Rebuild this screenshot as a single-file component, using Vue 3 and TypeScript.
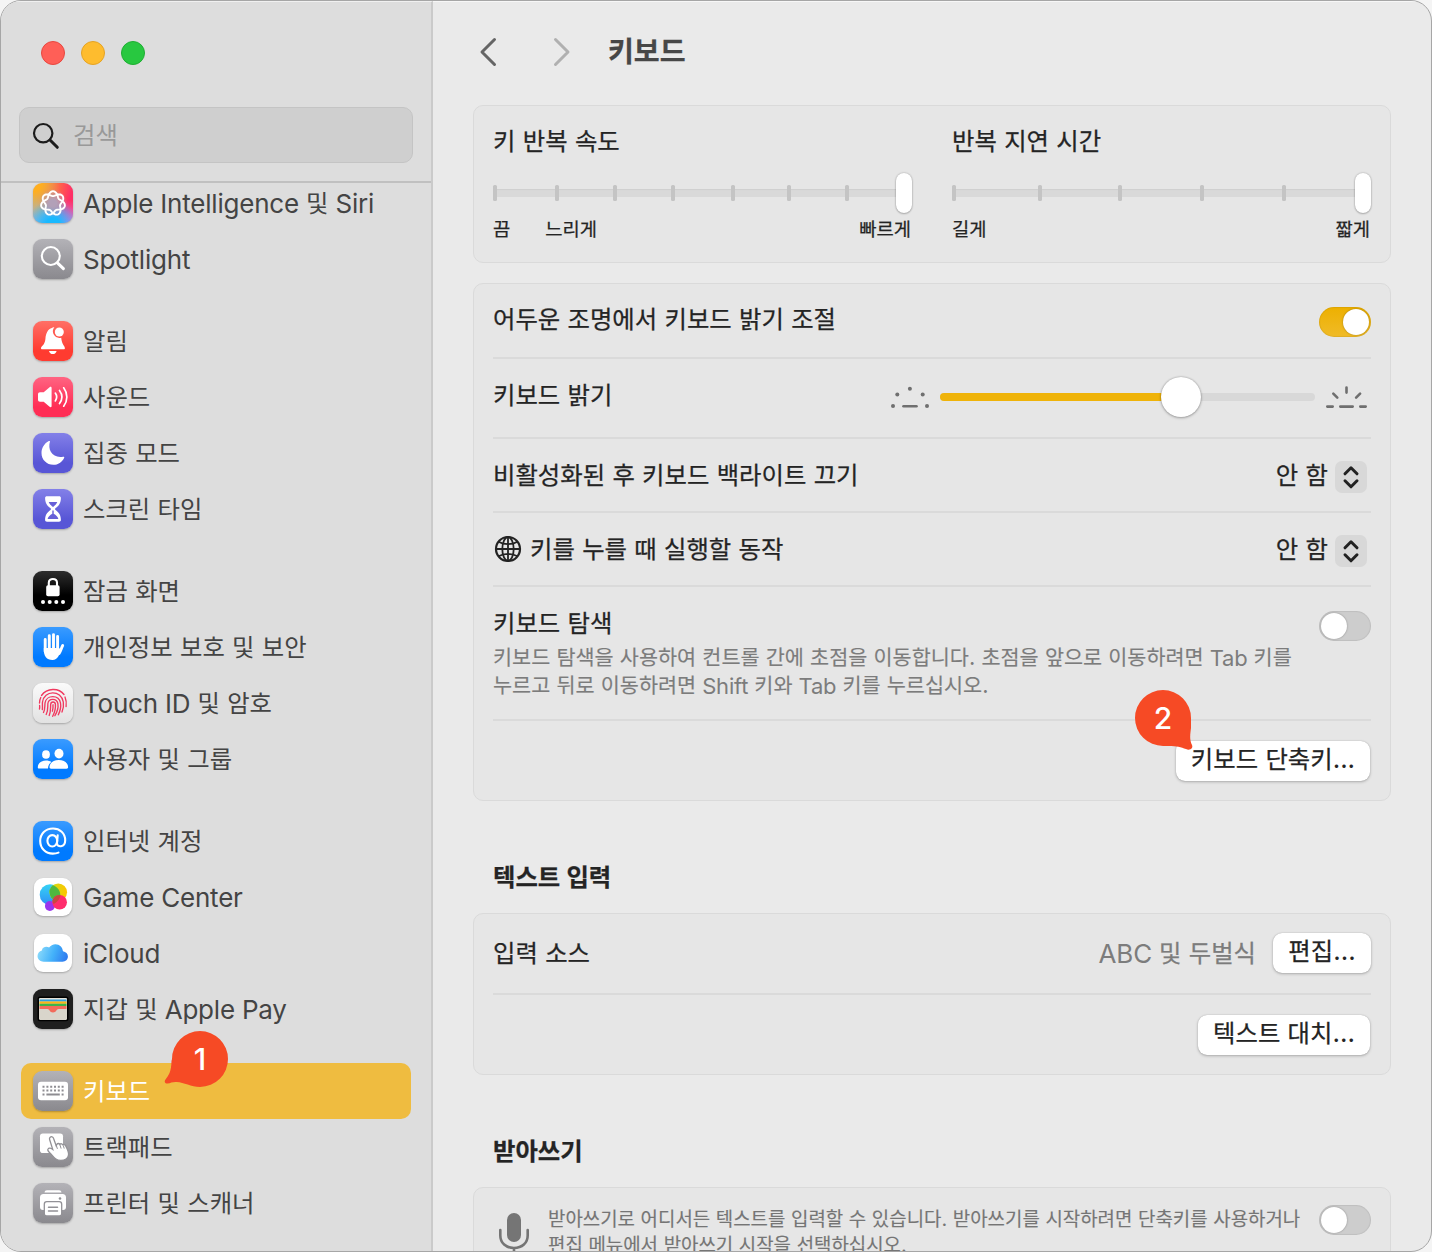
<script setup lang="ts">
import { h } from 'vue'

interface Item { label: string; icon: string; bg: string; selected?: boolean }

// Renders a label, wrapping Hangul runs so they can be sized separately from Latin text.
const Txt = (props: { t: string }) =>
  h('span', { class: 'txt' }, props.t.split(/([\uAC00-\uD7A3]+)/).filter(Boolean).map((run) =>
    /[\uAC00-\uD7A3]/.test(run) ? h('span', { class: 'ko' }, run) : h('span', { class: /[A-Za-z]/.test(run) ? 'la word' : 'la' }, run)))
Txt.props = ['t']

const rosette = (() => {
  const pts: string[] = []
  for (let i = 0; i < 168; i++) {
    const a = (i / 168) * Math.PI * 4
    const r = 9.7 + 2.4 * Math.cos(3.5 * a)
    pts.push(`${(20 + r * Math.sin(a)).toFixed(2)},${(20.4 - r * Math.cos(a)).toFixed(2)}`)
  }
  return pts.join(' ')
})()

const icons: Record<string, string> = {
  ai: `<polygon points="${rosette}" fill="none" stroke="#fff" stroke-width="1.9" stroke-linejoin="round"/>`,
  spotlight: '<circle cx="17.8" cy="17" r="9" fill="none" stroke="#fff" stroke-width="2.100"/><path d="M24.4 23.8l6 5.8" stroke="#fff" stroke-width="3" stroke-linecap="round"/>',
  bell: '<path d="M8 27.2c0-2.2 3.8-2.8 4.4-9.2.4-6 2.6-10 6.5-11 .7-.8 1.6-1 2.5-.8a6.6 6.6 0 0 0 6.8 10.5c.6 7 3.7 8.2 3.7 10.5 0 .7-.5 1-1.200 1H9.200c-.7 0-1.200-.3-1.200-1z" fill="#fff"/><circle cx="26.300" cy="11" r="4.500" fill="#fff"/><path d="M16 30h7.600c-.4 2-1.900 3.100-3.800 3.100S16.400 32 16 30z" fill="#fff"/>',
  sound: '<path d="M5 17.200c0-1.300.8-2 2-2h3.700l5.900-5c1-.8 2-.4 2 .8v18c0 1.200-1 1.600-2 .8l-5.900-5H7c-1.200 0-2-.7-2-2z" fill="#fff"/><g fill="none" stroke="#fff" stroke-width="1.700" stroke-linecap="round"><path d="M22.300 16.100c1.700 2.400 1.700 5.400 0 7.800M26.500 13.500c3 4 3 9 0 13M30.700 10.800c4.200 5.600 4.200 12.800 0 18.400"/></g>',
  moon: '<path d="M17 8.500c-2.700 8.200 2.600 17.200 13.200 15.200.8-.2 1.300.3 1 1C29 29.300 25 31.800 20.400 31.800 13.600 31.800 8.500 26.600 8.500 20c0-5 3-9.700 7.300-11.900.8-.4 1.400-.2 1.200.4z" fill="#fff"/>',
  hourglass: '<path d="M14 7.200h12c1.200 0 1.900.6 1.900 1.700 0 5-2 7.700-5.300 10.200-.7.600-.7 1.500 0 2 3.300 2.500 5.300 5 5.300 10 0 1.100-.7 1.700-1.900 1.700H14c-1.200 0-1.900-.6-1.900-1.700 0-5 2-7.500 5.300-10 .7-.5.7-1.400 0-2-3.300-2.500-5.300-5.200-5.300-10.200 0-1.100.7-1.700 1.900-1.700z" fill="#fff"/><path d="M15.700 13h8.600c-.8 1.900-2 3.100-3.300 4.200-.7.700-1.300.7-2 0-1.300-1.100-2.500-2.300-3.300-4.200zM19.300 21.500h1.400v3.300c2.300 1.200 4 2.800 4.700 5.200H14.600c.7-2.400 2.400-4 4.700-5.200z" fill="#6760d8"/>',
  lock: '<rect x="13.200" y="14.300" width="13.400" height="11" rx="1.800" fill="#fff"/><path d="M15.800 15v-3.300c0-5 8.200-5 8.200 0V15" fill="none" stroke="#fff" stroke-width="2.100"/><g fill="#fff"><circle cx="10" cy="31" r="2"/><circle cx="16.700" cy="31" r="2"/><circle cx="23.300" cy="31" r="2"/><circle cx="30" cy="31" r="2"/></g>',
  hand: '<g fill="none" stroke="#fff" stroke-width="2.900" stroke-linecap="round"><path d="M12.200 12.500v12M16.300 8.800v14M20.500 7.600v15M24.600 9.500v15"/><path d="M29.700 18.500c-1.200 2-2 5.500-3.600 8"/></g><path d="M10.800 21h15.200l1.700 1.500c-1.200 5.500-3 10.400-8.200 10.400-6 0-8.700-4-8.700-10z" fill="#fff"/>',
  touch: '<g fill="none" stroke="#f0395f" stroke-width="1.350" stroke-linecap="round"><path d="M8.500 12.500C14 4.500 26 4.800 31 11.500M32 14c1.200 2.800 1.600 6 1.100 9.500M6.500 20c0-2 .4-3.800 1.300-5.500M6.600 22.500c.2 1.300.1 2.300-.1 3.500"/><path d="M9.300 26.500c.5-2.200-.2-4.500.2-7.500C11 7 28.200 6.500 30.300 19c.6 3.500-.2 7.300-1.300 10"/><path d="M10.500 29.500c1.900-3.500 1-6.500 1.600-9.800 1.400-8 13.800-8.200 15.400.3.800 4.200-.6 8.500-2.200 11.800"/><path d="M13.200 31.500c2.200-4 1.300-7.500 1.700-11 .6-5.500 9-5.700 10 .2.600 4-1 8.800-3 12"/><path d="M16.200 32.500c1.800-4 1.200-8 1.500-11.300.3-2.800 4.300-3 4.700 0 .4 3.800-.8 8.300-2.700 12.100"/><path d="M20 21.800c.2 2.200-.1 4.300-.6 6.400"/></g>',
  users: '<g fill="#fff"><ellipse cx="13" cy="15.500" rx="3.900" ry="4.300"/><path d="M4.800 28.500c0-4.500 3.700-7 8.200-7 2.200 0 4 .5 5.300 1.500-2 1.500-3.200 3.500-3.300 6.500H6c-.8 0-1.200-.3-1.200-1z"/><ellipse cx="26" cy="14.600" rx="4.500" ry="4.900"/><path d="M16.500 28.300c0-4.300 4-7.300 9.300-7.300s9.300 3 9.300 7.300c0 .9-.5 1.400-1.600 1.400H18.100c-1.100 0-1.600-.5-1.600-1.400z"/></g>',
  at: '<g fill="none" stroke="#fff" stroke-width="2.100" stroke-linecap="round"><ellipse cx="19.300" cy="19.800" rx="4.900" ry="5.700"/><path d="M24.700 14.200l-.7 8c-.3 4.600 8.200 4.500 8.200-3C32.200 12 26.800 7.500 20 7.500 12.500 7.500 7.200 12.700 7.200 20S12.500 32.600 19.800 32.600c2.200 0 4-.3 5.700-1"/></g>',
  game: '<defs><linearGradient id="gb" x1="0" y1="0" x2="0" y2="1"><stop offset="0" stop-color="#36d3f5"/><stop offset="1" stop-color="#2f8ff5"/></linearGradient><linearGradient id="gy" x1="0" y1="0" x2="1" y2="0"><stop offset="0" stop-color="#c8e01a"/><stop offset="1" stop-color="#ffc400"/></linearGradient></defs><circle cx="17" cy="17.500" r="11" fill="url(#gb)"/><circle cx="16.700" cy="29.500" r="5.200" fill="#9a35ee"/><circle cx="25.500" cy="15" r="9.300" fill="url(#gy)"/><path d="M19.900 7.600a11 11 0 0 1 6 16.600 9.300 9.300 0 0 1-6-16.600z" fill="#4fb83f"/><circle cx="27" cy="25.500" r="7.700" fill="#ff2d6c"/><path d="M19.500 23.500a7.700 7.700 0 0 1 8.300-5.600c0 3.500-2.500 7-7 9.500-.9-.9-1.400-2.300-1.300-3.900z" fill="#c9473f"/>',
  cloud: '<defs><linearGradient id="gc" x1="0" y1=".3" x2="1" y2=".5"><stop offset="0" stop-color="#8edcfb"/><stop offset=".55" stop-color="#43b1fa"/><stop offset="1" stop-color="#2f7df0"/></linearGradient></defs><path d="M10.500 29.500C6.800 29.500 4 27 4 23.600c0-2.900 1.900-5.200 4.600-5.900.3-3.300 4.500-4.900 7.600-3 1.500-2.200 4-3.600 6.700-3.600 4.300 0 7.500 3.200 7.900 7.500 3 .5 5.200 2.700 5.200 5.500 0 3.100-2.500 5.400-5.700 5.400z" transform="translate(-.3 -.4)" fill="url(#gc)"/>',
  wallet: '<rect x="4.500" y="7.500" width="31" height="24.800" rx="2.500" fill="#000"/><rect x="6" y="9" width="28" height="22" rx="1.500" fill="#d9d5cb"/><path d="M6 12V10.500C6 9.600 6.600 9 7.500 9h25c.9 0 1.500.6 1.500 1.500V12z" fill="#e6e2d8"/><path d="M6.500 10.500h27v2h-27z" fill="#2e9fe0"/><path d="M6.500 12.500h27v2.200h-27z" fill="#fdb515"/><path d="M6.500 14.700h27v2.300h-27z" fill="#3cb54a"/><path d="M6.500 17h27v3h-8c-2 0-2.200 3.500-5.500 3.500s-3.500-3.500-5.500-3.500h-8z" fill="#f26b5b"/>',
  keyboard: '<rect x="5" y="10.700" width="30" height="18.500" rx="3" fill="#fff"/><g fill="#8e8d92"><path d="M9.500 14.700h2v2h-2zM13.400 14.700h2v2h-2zM17.200 14.700h2v2h-2zM21 14.700h2v2h-2zM24.800 14.700h2v2h-2zM28.600 14.700h2v2h-2zM9.500 18.600h2v2h-2zM13.400 18.600h2v2h-2zM17.200 18.600h2v2h-2zM21 18.600h2v2h-2zM24.800 18.600h2v2h-2zM28.600 18.600h2v2h-2zM9.500 22.500h2v2h-2zM13.400 22.500h13.400v2H13.400zM28.600 22.500h2v2h-2z"/></g>',
  trackpad: '<rect x="7" y="6.500" width="23" height="19.500" rx="2.800" fill="#fff"/><path d="M17.200 10.200c1.100-.9 2.800-.5 3.300 1l2.700 7.500.6-1.300c.8-1.200 2.300-1.200 3 0 1-1 2.500-.8 3.200.5 1.200-.6 2.500 0 2.800 1.200 1.200 2.500 3.200 6 2.700 9-.5 3.300-4 5.300-7.700 5.300-4.800 0-6.800-2.800-10.200-6.800-2.200-2-3.600-3.100-2.600-4.600.9-1.500 3-.8 4.700.4L16.600 12.500c-.3-.9-.1-1.700.6-2.300z" fill="#fff" stroke="#929196" stroke-width="1.300"/><path d="M23.300 18.500l1 3M27 18l1 3.200M30.400 18.800l.7 2.400" stroke="#929196" stroke-width="1" stroke-linecap="round"/>',
  printer: '<path d="M11.500 9.500c.3-1.500 1-2.200 2.500-2.200h12c1.500 0 2.200.7 2.500 2.200z" fill="#fff"/><path d="M7 14.500c0-2.300 1.200-3.500 3.500-3.500h19c2.300 0 3.500 1.200 3.500 3.500V24c0 2-1 3-3 3H10c-2 0-3-1-3-3z" fill="#fff"/><rect x="11.300" y="18.700" width="17.400" height="14.300" rx="2.500" fill="#fff" stroke="#929196" stroke-width="1.300"/><path d="M15.500 24.300h9M15.500 28h9" stroke="#929196" stroke-width="1.500" stroke-linecap="round"/><circle cx="27" cy="15.500" r="1.300" fill="#929196"/>',
}

const groups: Item[][] = [
  [
    { label: 'Apple Intelligence 및 Siri', icon: 'ai', bg: 'rainbow' },
    { label: 'Spotlight', icon: 'spotlight', bg: 'gray' },
  ],
  [
    { label: '알림', icon: 'bell', bg: 'red' },
    { label: '사운드', icon: 'sound', bg: 'pink' },
    { label: '집중 모드', icon: 'moon', bg: 'indigo' },
    { label: '스크린 타임', icon: 'hourglass', bg: 'indigo' },
  ],
  [
    { label: '잠금 화면', icon: 'lock', bg: 'black' },
    { label: '개인정보 보호 및 보안', icon: 'hand', bg: 'blue' },
    { label: 'Touch ID 및 암호', icon: 'touch', bg: 'light' },
    { label: '사용자 및 그룹', icon: 'users', bg: 'blue' },
  ],
  [
    { label: '인터넷 계정', icon: 'at', bg: 'blue' },
    { label: 'Game Center', icon: 'game', bg: 'white' },
    { label: 'iCloud', icon: 'cloud', bg: 'white' },
    { label: '지갑 및 Apple Pay', icon: 'wallet', bg: 'dark' },
  ],
  [
    { label: '키보드', icon: 'keyboard', bg: 'gray', selected: true },
    { label: '트랙패드', icon: 'trackpad', bg: 'gray' },
    { label: '프린터 및 스캐너', icon: 'printer', bg: 'gray' },
  ],
]

const sliders = [
  { title: '키 반복 속도', ticks: [0, 62, 120, 178, 238, 294, 352], labels: ['끔', '느리게', '빠르게'] },
  { title: '반복 지연 시간', ticks: [0, 86, 166, 248, 330], labels: ['길게', '짧게'] },
]
</script>

<template>
  <div class="window">
    <aside class="sidebar">
      <div class="lights"><i class="l-red" /><i class="l-yellow" /><i class="l-green" /></div>
      <div class="search">
        <svg width="28" height="28" viewBox="0 0 28 28"><circle cx="11.200" cy="11.200" r="9.200" fill="none" stroke="#1c1c1c" stroke-width="2.200" /><path d="M18 18l7.300 7.300" stroke="#1c1c1c" stroke-width="3" stroke-linecap="round" /></svg>
        <Txt t="검색" />
      </div>
      <nav class="list">
        <div v-for="(g, gi) in groups" :key="gi" class="group">
          <div v-for="it in g" :key="it.label" class="item" :class="{ selected: it.selected }">
            <svg class="icon" :class="it.bg" viewBox="0 0 40 40" v-html="icons[it.icon]" />
            <Txt :t="it.label" />
          </div>
        </div>
      </nav>
    </aside>

    <main class="main">
      <header class="toolbar">
        <svg class="nav" width="20" height="32" viewBox="0 0 20 32"><path d="M15.500 3.500L3 16l12.500 12.500" stroke="#656565" /></svg>
        <svg class="nav next" width="20" height="32" viewBox="0 0 20 32"><path d="M4.500 3.500L17 16 4.500 28.500" stroke="#b0b0b0" /></svg>
        <h1><Txt t="키보드" /></h1>
      </header>

      <section class="card repeat">
        <div v-for="s in sliders" :key="s.title" class="rate">
          <div class="rate-title"><Txt :t="s.title" /></div>
          <div class="track">
            <i v-for="t in s.ticks" :key="t" class="tick" :style="{ left: t + 'px' }" />
            <i class="thumb" />
          </div>
          <div class="rate-labels"><Txt v-for="l in s.labels" :key="l" :t="l" /></div>
        </div>
      </section>

      <section class="card options">
        <div class="row r1"><Txt t="어두운 조명에서 키보드 밝기 조절" /><div class="toggle on"><i /></div></div>
        <div class="row r2">
          <Txt t="키보드 밝기" />
          <div class="bright">
            <svg width="40" height="26" viewBox="0 0 40 26" fill="#6f6f6f"><circle cx="3" cy="22" r="2" /><circle cx="7.300" cy="10.400" r="2" /><circle cx="19.900" cy="4.700" r="2" /><circle cx="32.700" cy="10.400" r="2" /><circle cx="37" cy="22" r="2" /><rect x="12.200" y="21" width="15.600" height="2.600" rx="1.300" /></svg>
            <div class="range"><i class="fill" /><i class="knob" /></div>
            <svg width="42" height="26" viewBox="0 0 42 26" stroke="#6f6f6f" stroke-width="2.600" stroke-linecap="round"><path d="M21.500 3.600v5M8.300 9.600l4 4M35.100 9.600l-4 4M2.300 22.600h5.400M15.300 22.600h12.400M35.300 22.600h5.400" /></svg>
          </div>
        </div>
        <div class="row r3">
          <Txt t="비활성화된 후 키보드 백라이트 끄기" />
          <div class="popup"><Txt t="안 함" /><svg width="32" height="32" viewBox="0 0 32 32"><path d="M10 12.800l6-6 6 6M10 19.800l6 6 6-6" /></svg></div>
        </div>
        <div class="row r3">
          <div class="globe-label">
            <svg width="28" height="28" viewBox="0 0 28 28" fill="none" stroke="#222" stroke-width="1.800"><circle cx="14" cy="14" r="12" stroke-width="2.200" /><ellipse cx="14" cy="14" rx="5.700" ry="12" /><path d="M14 2v24M2 14h24M4.600 6.700c5.300 3.300 13.500 3.300 18.800 0M4.600 21.300c5.300-3.300 13.500-3.300 18.800 0" /></svg>
            <Txt t="키를 누를 때 실행할 동작" />
          </div>
          <div class="popup"><Txt t="안 함" /><svg width="32" height="32" viewBox="0 0 32 32"><path d="M10 12.800l6-6 6 6M10 19.800l6 6 6-6" /></svg></div>
        </div>
        <div class="row r5">
          <div class="nav-text">
            <Txt t="키보드 탐색" />
            <p><Txt t="키보드 탐색을 사용하여 컨트롤 간에 초점을 이동합니다. 초점을 앞으로 이동하려면 Tab 키를" /><br><Txt t="누르고 뒤로 이동하려면 Shift 키와 Tab 키를 누르십시오." /></p>
          </div>
          <div class="toggle"><i /></div>
        </div>
        <div class="row r6"><button class="b-short"><Txt t="키보드 단축키..." /></button></div>
      </section>

      <h2 class="h-text"><Txt t="텍스트 입력" /></h2>
      <section class="card input-card">
        <div class="row r7">
          <Txt t="입력 소스" />
          <div class="source"><Txt t="ABC 및 두벌식" /><button class="b-edit"><Txt t="편집..." /></button></div>
        </div>
        <div class="row r6"><button class="b-replace"><Txt t="텍스트 대치..." /></button></div>
      </section>

      <h2 class="h-dict"><Txt t="받아쓰기" /></h2>
      <section class="card dictation">
        <svg width="32" height="46" viewBox="0 0 32 46"><rect x="9" y="1" width="14" height="29" rx="7" fill="#757575" /><path d="M2.300 18v5.500c0 7.500 5.700 12.500 13.700 12.500s13.700-5 13.700-12.500V18M16 36v8" fill="none" stroke="#757575" stroke-width="2.600" stroke-linecap="round" /></svg>
        <p><Txt t="받아쓰기로 어디서든 텍스트를 입력할 수 있습니다. 받아쓰기를 시작하려면 단축키를 사용하거나" /><br><Txt t="편집 메뉴에서 받아쓰기 시작을 선택하십시오." /></p>
        <div class="toggle"><i /></div>
      </section>
    </main>

    <div class="pin pin1">
      <svg width="72" height="62" viewBox="0 0 72 62"><path d="M12 31A28 28 0 1 1 40 59C31 59 24 54.300 16.700 54 12 53.800 11 55 7.500 55.600 5 55.800 3.900 53.600 5.500 51.500 8.500 47.500 11.300 44 11.500 33z" /></svg>
      <span>1</span>
    </div>
    <div class="pin pin2">
      <svg width="72" height="66" viewBox="0 0 72 66"><path d="M59 30A28 28 0 1 0 31 58C43 57.500 48 58.500 54 61 57.500 63 61.500 60.500 60 57 57.300 51.500 58.300 46 59 40z" /></svg>
      <span>2</span>
    </div>
  </div>
</template>

<style>
body { margin: 0; background: #f4f4f4; }
.txt { white-space: nowrap; }
.txt .la { white-space: pre; }
.txt .word { position: relative; top: 1px; letter-spacing: -0.008em; }
.txt .ko { font-family: "Noto Sans CJK KR", sans-serif; font-size: 0.937em; line-height: 1px; }
.main .ko { -webkit-text-stroke: 0.25px currentColor; }
.main p .ko { font-size: 0.943em; -webkit-text-stroke-width: 0.15px; }
.main .dictation p .ko { font-size: 0.946em; }
</style>

<style scoped>
* { box-sizing: border-box; }
.window {
  position: relative; width: 1432px; height: 1252px; display: flex; overflow: hidden;
  border: 1px solid #a6a6a6; border-radius: 21px; background: #eaeaea;
  font: 26px/32px Inter, "Noto Sans CJK KR", sans-serif; color: #242424;
}
.sidebar { flex: none; width: 432px; display: flex; flex-direction: column; background: #ddd; border-right: 2px solid #cacaca; border-top: 1px solid #f0f0f0; color: #444; }
.lights { display: flex; gap: 16px; padding: 39px 0 0 40px; }
.lights i { width: 24px; height: 24px; border-radius: 50%; }
.l-red { background: #ff5f57; border: 1px solid #e8473f; }
.l-yellow { background: #febc2e; border: 1px solid #e5a324; }
.l-green { background: #28c840; border: 1px solid #1fae33; }
.search { margin: 42px 0 0 18px; width: 394px; height: 56px; flex: none; display: flex; align-items: center; gap: 13px; padding-left: 12px; border: 1px solid #c4c4c4; border-radius: 10px; background: #cfcfcf; color: #999; }
.search svg { margin-top: 1px; }
.list { margin-top: 18px; border-top: 2px solid #c0c0c0; flex: 1; overflow: hidden; }
.group { margin: 0 0 26px 20px; width: 390px; }
.group:first-child { margin-top: -8px; }
.item { height: 56px; display: flex; align-items: center; padding-left: 12px; gap: 10px; border-radius: 10px; }
.item.selected { background: #efbc40; color: #fff; }
.icon { width: 40px; height: 40px; flex: none; border-radius: 9px; box-shadow: 0 1px 2px rgba(0, 0, 0, .25); }
.gray { background: linear-gradient(#b3b2b7, #8a898e); }
.red { background: linear-gradient(#ff7066, #ff3b30 75%); }
.pink { background: linear-gradient(#ff6482, #ff2d55 75%); }
.indigo { background: linear-gradient(#8380e8, #5856d6 75%); }
.black { background: linear-gradient(#2e2e2e, #000 60%); }
.blue { background: linear-gradient(#3a9bff, #007aff 75%); }
.light { background: linear-gradient(#fafafa, #e2e2e2); }
.white { background: #fff; width: 38px; height: 38px; margin: 0 1px; }
.dark { background: #1f1f1f; }
.rainbow { background: radial-gradient(circle at 50% 50%, #b2a0b8 0 12%, transparent 50%), radial-gradient(circle at 50% 105%, #19b9ff 0 15%, transparent 55%), radial-gradient(circle at 0 0, #ffae1f 0 15%, transparent 70%), radial-gradient(circle at 100% 10%, #ff2f66 0 25%, transparent 75%), radial-gradient(circle at 100% 90%, #d58cff 0 20%, transparent 60%), #8db4e8; }

.main { flex: 1; border-top: 1px solid #f7f7f7; padding: 0 40px 0 40px; overflow: hidden; }
.toolbar { height: 103px; display: flex; align-items: flex-start; padding-top: 34px; }
.nav { margin-left: 6px; margin-top: 0; fill: none; stroke-width: 3; stroke-linecap: round; stroke-linejoin: round; }
.nav.next { margin-left: 52px; }
h1 { margin: -1px 0 0 37px; font-size: 30px; line-height: 32px; font-weight: 700; color: #474747; }
.card { width: 918px; background: #e6e6e6; border: 1px solid #dadada; border-radius: 10px; padding: 0 19px; }
.repeat { height: 158px; display: flex; justify-content: space-between; padding-top: 19px; }
.rate { width: 419px; }
.rate-title { height: 32px; }
.track { position: relative; height: 8px; margin-top: 32px; background: #d9d9d9; box-shadow: inset 0 1px 1px #cfcfcf; }
.tick { position: absolute; top: -4px; width: 4px; height: 16px; border-radius: 1.500px; background: #c4c4c4; }
.thumb { position: absolute; right: 0; top: -16px; width: 16px; height: 40px; border-radius: 8px; background: #fff; box-shadow: 0 0 2px rgba(0, 0, 0, .3), 0 1px 2px rgba(0, 0, 0, .2); }
.rate-labels { display: flex; margin-top: 16px; font-size: 20px; }
.rate-labels > :last-child { margin-left: auto; margin-right: 1px; }
.rate-labels > :nth-child(2):not(:last-child) { margin-left: 35px; }

.options { margin-top: 20px; height: 518px; }
.row { display: flex; justify-content: space-between; border-bottom: 2px solid #dadada; }
.row:last-child { border-bottom: 0; }
.r1 { height: 75px; padding-top: 19px; }
.r1 .toggle { margin-top: 4px; }
.r2 { height: 80px; padding-top: 20px; }
.bright { display: flex; align-items: center; height: 40px; margin-top: -2px; gap: 10px; }
.bright svg:last-child { margin-left: 0; margin-right: 4px; }
.range { position: relative; width: 375px; height: 8px; border-radius: 4px; background: #d8d8d8; }
.fill { display: block; width: 240px; height: 8px; border-radius: 4px 0 0 4px; background: #efb309; }
.knob { position: absolute; left: 221px; top: -16px; width: 40px; height: 40px; border-radius: 50%; background: #fff; box-shadow: 0 0 2px rgba(0, 0, 0, .3), 0 1px 3px rgba(0, 0, 0, .25); }
.r3 { height: 74px; padding-top: 20px; }
.popup { display: flex; gap: 7px; margin-right: 4px; }
.popup svg { margin-top: 2px; border-radius: 7px; background: #d8d8d8; fill: none; stroke: #222; stroke-width: 3; stroke-linecap: round; stroke-linejoin: round; }
.globe-label { display: flex; gap: 8px; padding-left: 1px; }
.globe-label svg { margin-top: 2px; }
.r5 { height: 134px; padding-top: 20px; }
.r5 .toggle { margin-top: 4px; }
p { margin: 0; }
.nav-text p { margin-top: 4px; font-size: 22px; line-height: 28px; color: #7c7c7c; }
.r6 { height: 80px; padding-top: 20px; justify-content: flex-end; }
.r6 button { margin-right: 1px; }
button { height: 40px; padding: 0 0 5px; border: 0; border-radius: 9px; background: #fff; font: inherit; color: inherit; box-shadow: 0 0 1px rgba(0, 0, 0, .25), 0 1px 3px rgba(0, 0, 0, .25); }
.b-short { width: 194px; }
.b-replace { width: 172px; }
.b-edit { width: 98px; }
.toggle { flex: none; width: 52px; height: 30px; padding: 2px; border-radius: 15px; background: #cdcdcd; box-shadow: inset 0 0 1px 1px rgba(0, 0, 0, .07); }
.toggle i { display: block; width: 26px; height: 26px; border-radius: 50%; background: #fff; box-shadow: 0 0 2px rgba(0, 0, 0, .35); }
.toggle.on { background: linear-gradient(#edb000, #f0bb28); }
.toggle.on i { margin-left: 22px; }
h2 { margin: 0 0 0 20px; font-size: 26px; line-height: 32px; font-weight: 700; }
.h-text { margin-top: 60px; margin-bottom: 20px; }
.input-card { height: 162px; }
.r7 { height: 81px; padding-top: 19px; }
.r7 > :first-child, .source > :first-child { margin-top: 4px; }
.source { display: flex; gap: 17px; color: #7c7c7c; }
.source button { color: #242424; }
.h-dict { margin-top: 60px; margin-bottom: 20px; }
.dictation { height: 160px; display: flex; padding-top: 19px; }
.dictation > svg { flex: none; margin: 5px 0 0 5px; }
.dictation p { margin: -1px 0 0 18px; font-size: 20px; line-height: 26px; color: #757575; width: 771px; }
.dictation .toggle { margin-top: -2px; }
.r6 button, .source button { flex: none; }
.pin { position: absolute; color: #fff; font-size: 30px; line-height: 36px; font-weight: 500; text-align: center; }
.pin svg { display: block; fill: #f64a25; }
.pin span { position: absolute; width: 56px; }
.pin1 { left: 159px; top: 1027px; }
.pin1 span { left: 12px; top: 13px; }
.pin2 { left: 1131px; top: 687px; }
.pin2 span { left: 3px; top: 12px; }
</style>
